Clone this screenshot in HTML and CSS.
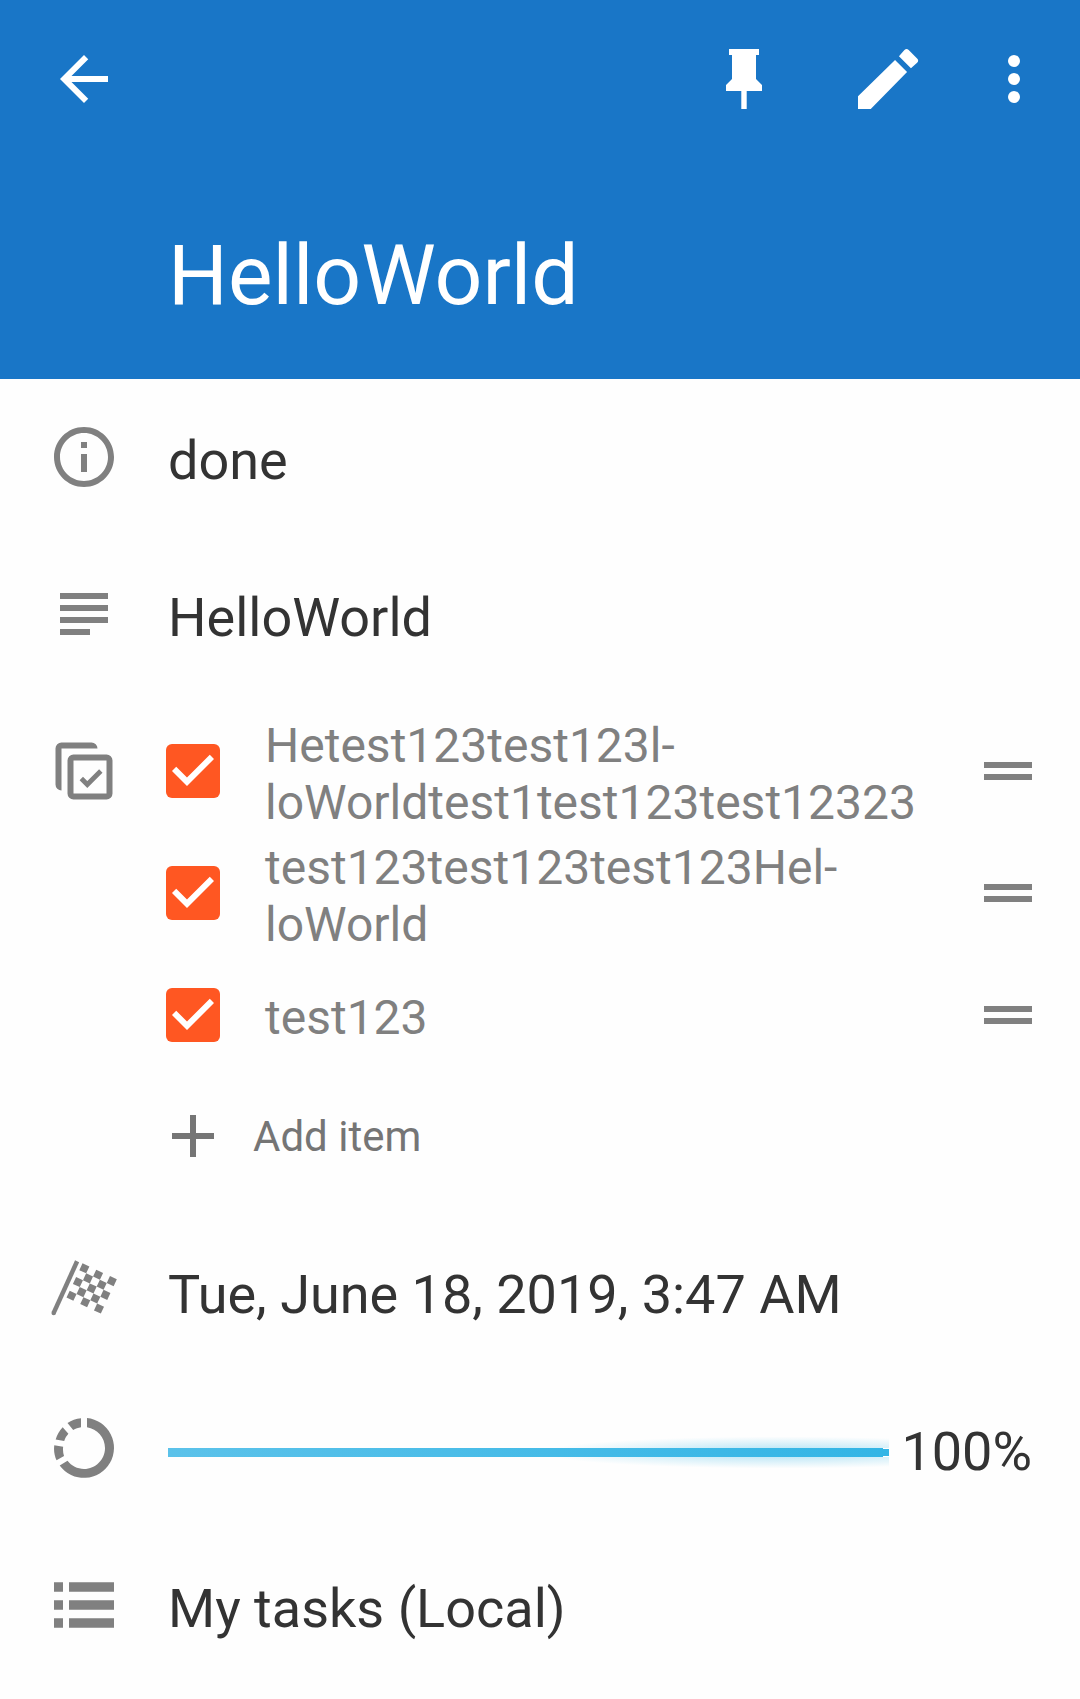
FILE: index.html
```html
<!DOCTYPE html>
<html lang="en">
<head>
<meta charset="utf-8">
<meta name="viewport" content="width=device-width, initial-scale=1">
<title>HelloWorld</title>
<link rel="stylesheet" href="styles.css">
</head>
<body>
<header class="header">
  <nav class="toolbar" aria-label="Task actions">
    <a class="tool back" href="#" aria-label="Back">
      <svg class="icon" viewBox="0 0 24 24"><path d="M20 11H7.83l5.59-5.59L12 4l-8 8 8 8 1.41-1.41L7.83 13H20v-2z"/></svg>
    </a>
    <button class="tool" type="button" aria-label="Pin">
      <svg class="icon" viewBox="0 0 24 24"><path d="M7 2H17V4H16V12L18 14V16H12.9V22H11.1V16H6V14L8 12V4H7z"/></svg>
    </button>
    <button class="tool" type="button" aria-label="Edit">
      <svg class="icon" viewBox="0 0 24 24"><path d="M2 17.75V22h4.25L18.35 9.7l-4-4zM21.7 6.55a1 1 0 0 0 0-1.42l-2.8-2.8a1 1 0 0 0-1.42 0L15.65 4.4l4 4z"/></svg>
    </button>
    <button class="tool more" type="button" aria-label="More options">
      <svg class="icon" viewBox="0 0 24 24"><circle cx="12" cy="6" r="2"/><circle cx="12" cy="12" r="2"/><circle cx="12" cy="18" r="2"/></svg>
    </button>
  </nav>
  <h1 class="title">HelloWorld</h1>
</header>
<main class="details">
  <section class="row">
    <svg class="icon" viewBox="0 0 24 24"><path d="M11 7h2v2h-2zm0 4h2v6h-2zm1-9C6.480 2 2 6.480 2 12s4.480 10 10 10 10-4.480 10-10S17.520 2 12 2zm0 18c-4.410 0-8-3.590-8-8s3.590-8 8-8 8 3.590 8 8-3.590 8-8 8z"/></svg>
    <p class="value">done</p>
  </section>
  <section class="row">
    <svg class="icon" viewBox="0 0 24 24"><path d="M4 5h16v2H4zM4 9h16v2H4zM4 13h16v2H4zM4 17h10v2H4z"/></svg>
    <p class="value">HelloWorld</p>
  </section>
  <section class="row row-checklist">
    <svg class="icon" viewBox="0 0 24 24"><path d="M2.500 4.500a2 2 0 0 1 2-2H14.500a2 2 0 0 1 2 2H4.500V18.500a2 2 0 0 1-2-2z"/><g fill="none" stroke="currentColor" stroke-width="2"><rect x="7.500" y="7.500" width="13" height="13" rx="1"/><path d="M11.100 14.500l2 2 4.500-4.500" stroke-width="1.600"/></g></svg>
    <div class="checklist">
      <ul class="items">
        <li class="item">
          <input class="check" type="checkbox" id="item-1" checked>
          <label class="label" for="item-1">Hetest123test123l&shy;loWorldtest1test123test12323</label>
          <button class="handle" type="button" aria-label="Reorder item"><svg class="icon" viewBox="0 0 24 24"><path d="M4 9h16v2H4zM4 13h16v2H4z"/></svg></button>
        </li>
        <li class="item">
          <input class="check" type="checkbox" id="item-2" checked>
          <label class="label" for="item-2">test123test123test123Hel&shy;loWorld</label>
          <button class="handle" type="button" aria-label="Reorder item"><svg class="icon" viewBox="0 0 24 24"><path d="M4 9h16v2H4zM4 13h16v2H4z"/></svg></button>
        </li>
        <li class="item">
          <input class="check" type="checkbox" id="item-3" checked>
          <label class="label" for="item-3">test123</label>
          <button class="handle" type="button" aria-label="Reorder item"><svg class="icon" viewBox="0 0 24 24"><path d="M4 9h16v2H4zM4 13h16v2H4z"/></svg></button>
        </li>
      </ul>
      <button class="add" type="button"><svg class="icon" viewBox="0 0 24 24"><path d="M19 13h-6v6h-2v-6H5v-2h6V5h2v6h6z"/></svg>Add item</button>
    </div>
  </section>
  <section class="row">
    <svg class="icon" viewBox="0 0 24 24" overflow="visible"><path d="M1.900 19.300L9.700 2.100" fill="none" stroke="currentColor" stroke-width="1.500"/><circle cx="1.900" cy="19.300" r=".75"/><g transform="translate(11.500 2.760) rotate(25) scale(1.010)"><path d="M0 0h2.500v2.500H0zM5 0h2.500v2.500H5zM10 0h2.500v2.500H10zM2.500 2.500H5V5H2.500zM7.500 2.500H10V5H7.500zM0 5h2.500v2.500H0zM5 5h2.500v2.500H5zM10 5h2.500v2.500H10zM2.500 7.500H5V10H2.500zM7.500 7.500H10V10H7.500zM0 10h2.500v2.500H0zM5 10h2.500v2.500H5zM10 10h2.500v2.500H10z"/></g></svg>
    <p class="value">Tue, June 18, 2019, 3:47 AM</p>
  </section>
  <section class="row">
    <svg class="icon" viewBox="0 0 24 24"><path d="M13 2v3.070c3.390.49 6 3.390 6 6.930 0 3.870-3.130 7-7 7-2.200 0-4.200-1.050-5.500-2.720l-2.600 1.540A10 10 0 1 0 13 2zM11 2.050c-1.640.16-3.200.74-4.500 1.610l1.900 2.350c.8-.46 1.670-.8 2.600-.94zM4.900 5.100A10 10 0 0 0 2.550 9.200l2.850.45c.3-.9.780-1.700 1.400-2.400zM2.100 11.100c-.25 1.700.05 3.450.75 5l2.500-1.450A7 7 0 0 1 5.050 11.600z"/></svg>
    <label class="value progress-label" for="progress"><progress class="progress" id="progress" max="100" value="100"></progress>100%</label>
  </section>
  <section class="row">
    <svg class="icon" viewBox="0 0 24 24"><path d="M2 4.400h3v3.200H2zM7 4.400h15v3.200H7zM2 10.400h3v3.200H2zM7 10.400h15v3.200H7zM2 16.400h3v3.200H2zM7 16.400h15v3.200H7z"/></svg>
    <p class="value">My tasks (Local)</p>
  </section>
</main>
</body>
</html>
```
FILE: styles.css
```css
* {
  box-sizing: border-box;
}

body {
  margin: 0;
  background: #fefefe;
  color: #333;
  font-family: Roboto, "Noto Sans", sans-serif;
}

button {
  border: 0;
  background: none;
  color: inherit;
  font: inherit;
  cursor: pointer;
}

.icon {
  display: block;
  flex: none;
  width: 72px;
  height: 72px;
  fill: currentColor;
}

.header {
  padding-bottom: 53px;
  background: #1976c7;
  color: #fff;
}

.toolbar {
  display: flex;
  padding: 7px 12px 0;
}

.tool {
  padding: 36px;
  color: inherit;
}

.back {
  margin-right: auto;
}

.more {
  padding: 36px 18px;
}

.title {
  margin: 0;
  padding: 75px 48px 0 168px;
  font-size: 84px;
  font-weight: 400;
  line-height: 100px;
}

.row {
  display: flex;
  align-items: flex-start;
  gap: 48px;
  padding: 42px 48px 43px;
  color: #808080;
}

.value {
  flex: 1;
  margin: 8px 0 0;
  color: #333;
  font-size: 54px;
  line-height: 64px;
}

.row-checklist {
  padding: 17px 36px 17px 48px;
}

.row-checklist > .icon {
  margin-top: 25px;
}

.checklist {
  flex: 1;
}

.items {
  margin: 0;
  padding: 0;
  list-style: none;
}

.item {
  display: flex;
  align-items: center;
  height: 122px;
}

.check {
  flex: none;
  width: 54px;
  height: 54px;
  margin: 0 45px 0 -2px;
  border-radius: 6px;
  appearance: none;
  border: 6px solid #808080;
}

.check:checked {
  border: 0;
  background: #ff5722 url("data:image/svg+xml,%3Csvg xmlns='http://www.w3.org/2000/svg' viewBox='0 0 18 18'%3E%3Cpath d='M7 14L2 9l1.410-1.410L7 11.170l7.590-7.580L16 5z' fill='%23fff'/%3E%3C/svg%3E");
}

.label {
  flex: 1;
  padding-top: 5px;
  font-size: 48px;
  line-height: 57px;
}

.handle {
  padding: 0;
}

.add {
  display: flex;
  align-items: center;
  gap: 24px;
  width: 100%;
  height: 120px;
  margin-left: -11px;
  padding: 0;
  color: #757575;
  font-size: 42px;
}

.progress-label {
  display: flex;
  align-items: center;
  gap: 12px;
}

.progress {
  flex: 1;
  min-width: 0;
  height: 33px;
  appearance: none;
  border: 0;
  background: none;
}

.progress::-webkit-progress-bar {
  background: linear-gradient(#ddd, #ddd) center / 100% 9px no-repeat;
}

/* The filled part is a thin bar with a soft glow near its leading end. */
.progress::-webkit-progress-value {
  background:
    linear-gradient(90deg, #5bc2ea, #33b5e5) left center / calc(100% - 6px) 9px no-repeat,
    linear-gradient(#33b5e5, #33b5e5) right center / 6px 7px no-repeat,
    linear-gradient(#fefefe, #fefefe) right center / 6px 9px no-repeat,
    radial-gradient(ellipse 240px 16px at 85% 50%, #33b5e566, #33b5e500);
}
```
